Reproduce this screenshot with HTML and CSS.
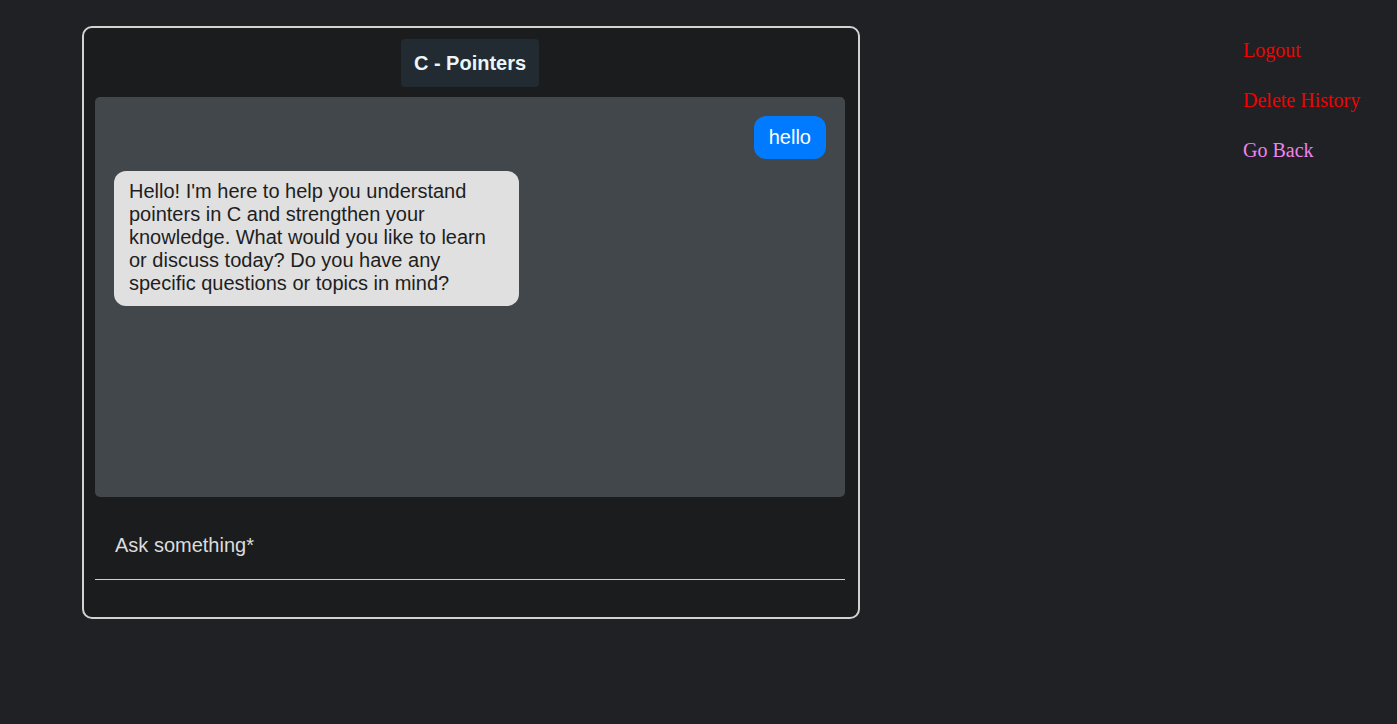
FILE: index.html
```html
<!DOCTYPE html>
<html>
<head>
<meta charset="utf-8">
<link rel="stylesheet" href="styles.css">
</head>
<body>
<div class="page">
  <div class="card">
    <div class="title-row"><div class="title">C - Pointers</div></div>
    <div class="chat">
      <div class="msg user">hello</div>
      <div class="msg bot">Hello! I'm here to help you understand pointers in C and strengthen your knowledge. What would you like to learn or discuss today? Do you have any specific questions or topics in mind?</div>
    </div>
    <div class="input-field">
      <label class="input-label">Ask something*</label>
    </div>
  </div>
  <nav class="side">
    <a class="link red" href="#">Logout</a>
    <a class="link red" href="#">Delete History</a>
    <a class="link violet" href="#">Go Back</a>
  </nav>
</div>
</body>
</html>
```

FILE: styles.css
```css
html, body {
  margin: 0;
  padding: 0;
  background: #202124;
  height: 100%;
}
.page {
  display: flex;
  align-items: flex-start;
  padding: 26px 0 0 82px;
}
.card {
  box-sizing: border-box;
  width: 778px;
  border: 2px solid #d2d2d2;
  border-radius: 10px;
  background: #1b1c1e;
  padding: 11px 13px 37px 11px;
  font-family: "Liberation Sans", Arial, sans-serif;
}
.title-row {
  display: flex;
  justify-content: center;
}
.title {
  background: #222b31;
  color: #eaf6fb;
  font-weight: bold;
  font-size: 20px;
  line-height: 24px;
  padding: 12px 13px;
  border-radius: 4px;
}
.chat {
  margin-top: 10px;
  height: 400px;
  box-sizing: border-box;
  background: #41474a;
  border-radius: 5px;
  padding: 19px 19px;
  display: flex;
  flex-direction: column;
  gap: 12px;
}
.msg {
  font-size: 20px;
  line-height: 23px;
  border-radius: 12px;
  box-sizing: border-box;
}
.user {
  align-self: flex-end;
  background: #007bff;
  color: #fff;
  padding: 10px 15px;
}
.bot {
  align-self: flex-start;
  max-width: 405px;
  background: #e0e0e0;
  color: #1e1e1e;
  padding: 9px 15px 11px 15px;
}
.input-field {
  height: 83px;
  box-sizing: border-box;
  border-bottom: 1px solid #d0d0d0;
  padding: 36px 20px 0 20px;
}
.input-label {
  display: block;
  color: #dcdcdc;
  font-size: 20px;
  line-height: 24px;
}
.side {
  margin-left: auto;
  width: 154px;
  padding-top: 13px;
  display: flex;
  flex-direction: column;
  gap: 27px;
  font-family: "Liberation Serif", "Times New Roman", serif;
  font-size: 20px;
  line-height: 23px;
}
.link {
  text-decoration: none;
}
.red { color: #f40000; }
.violet { color: #ee82ee; }
```
